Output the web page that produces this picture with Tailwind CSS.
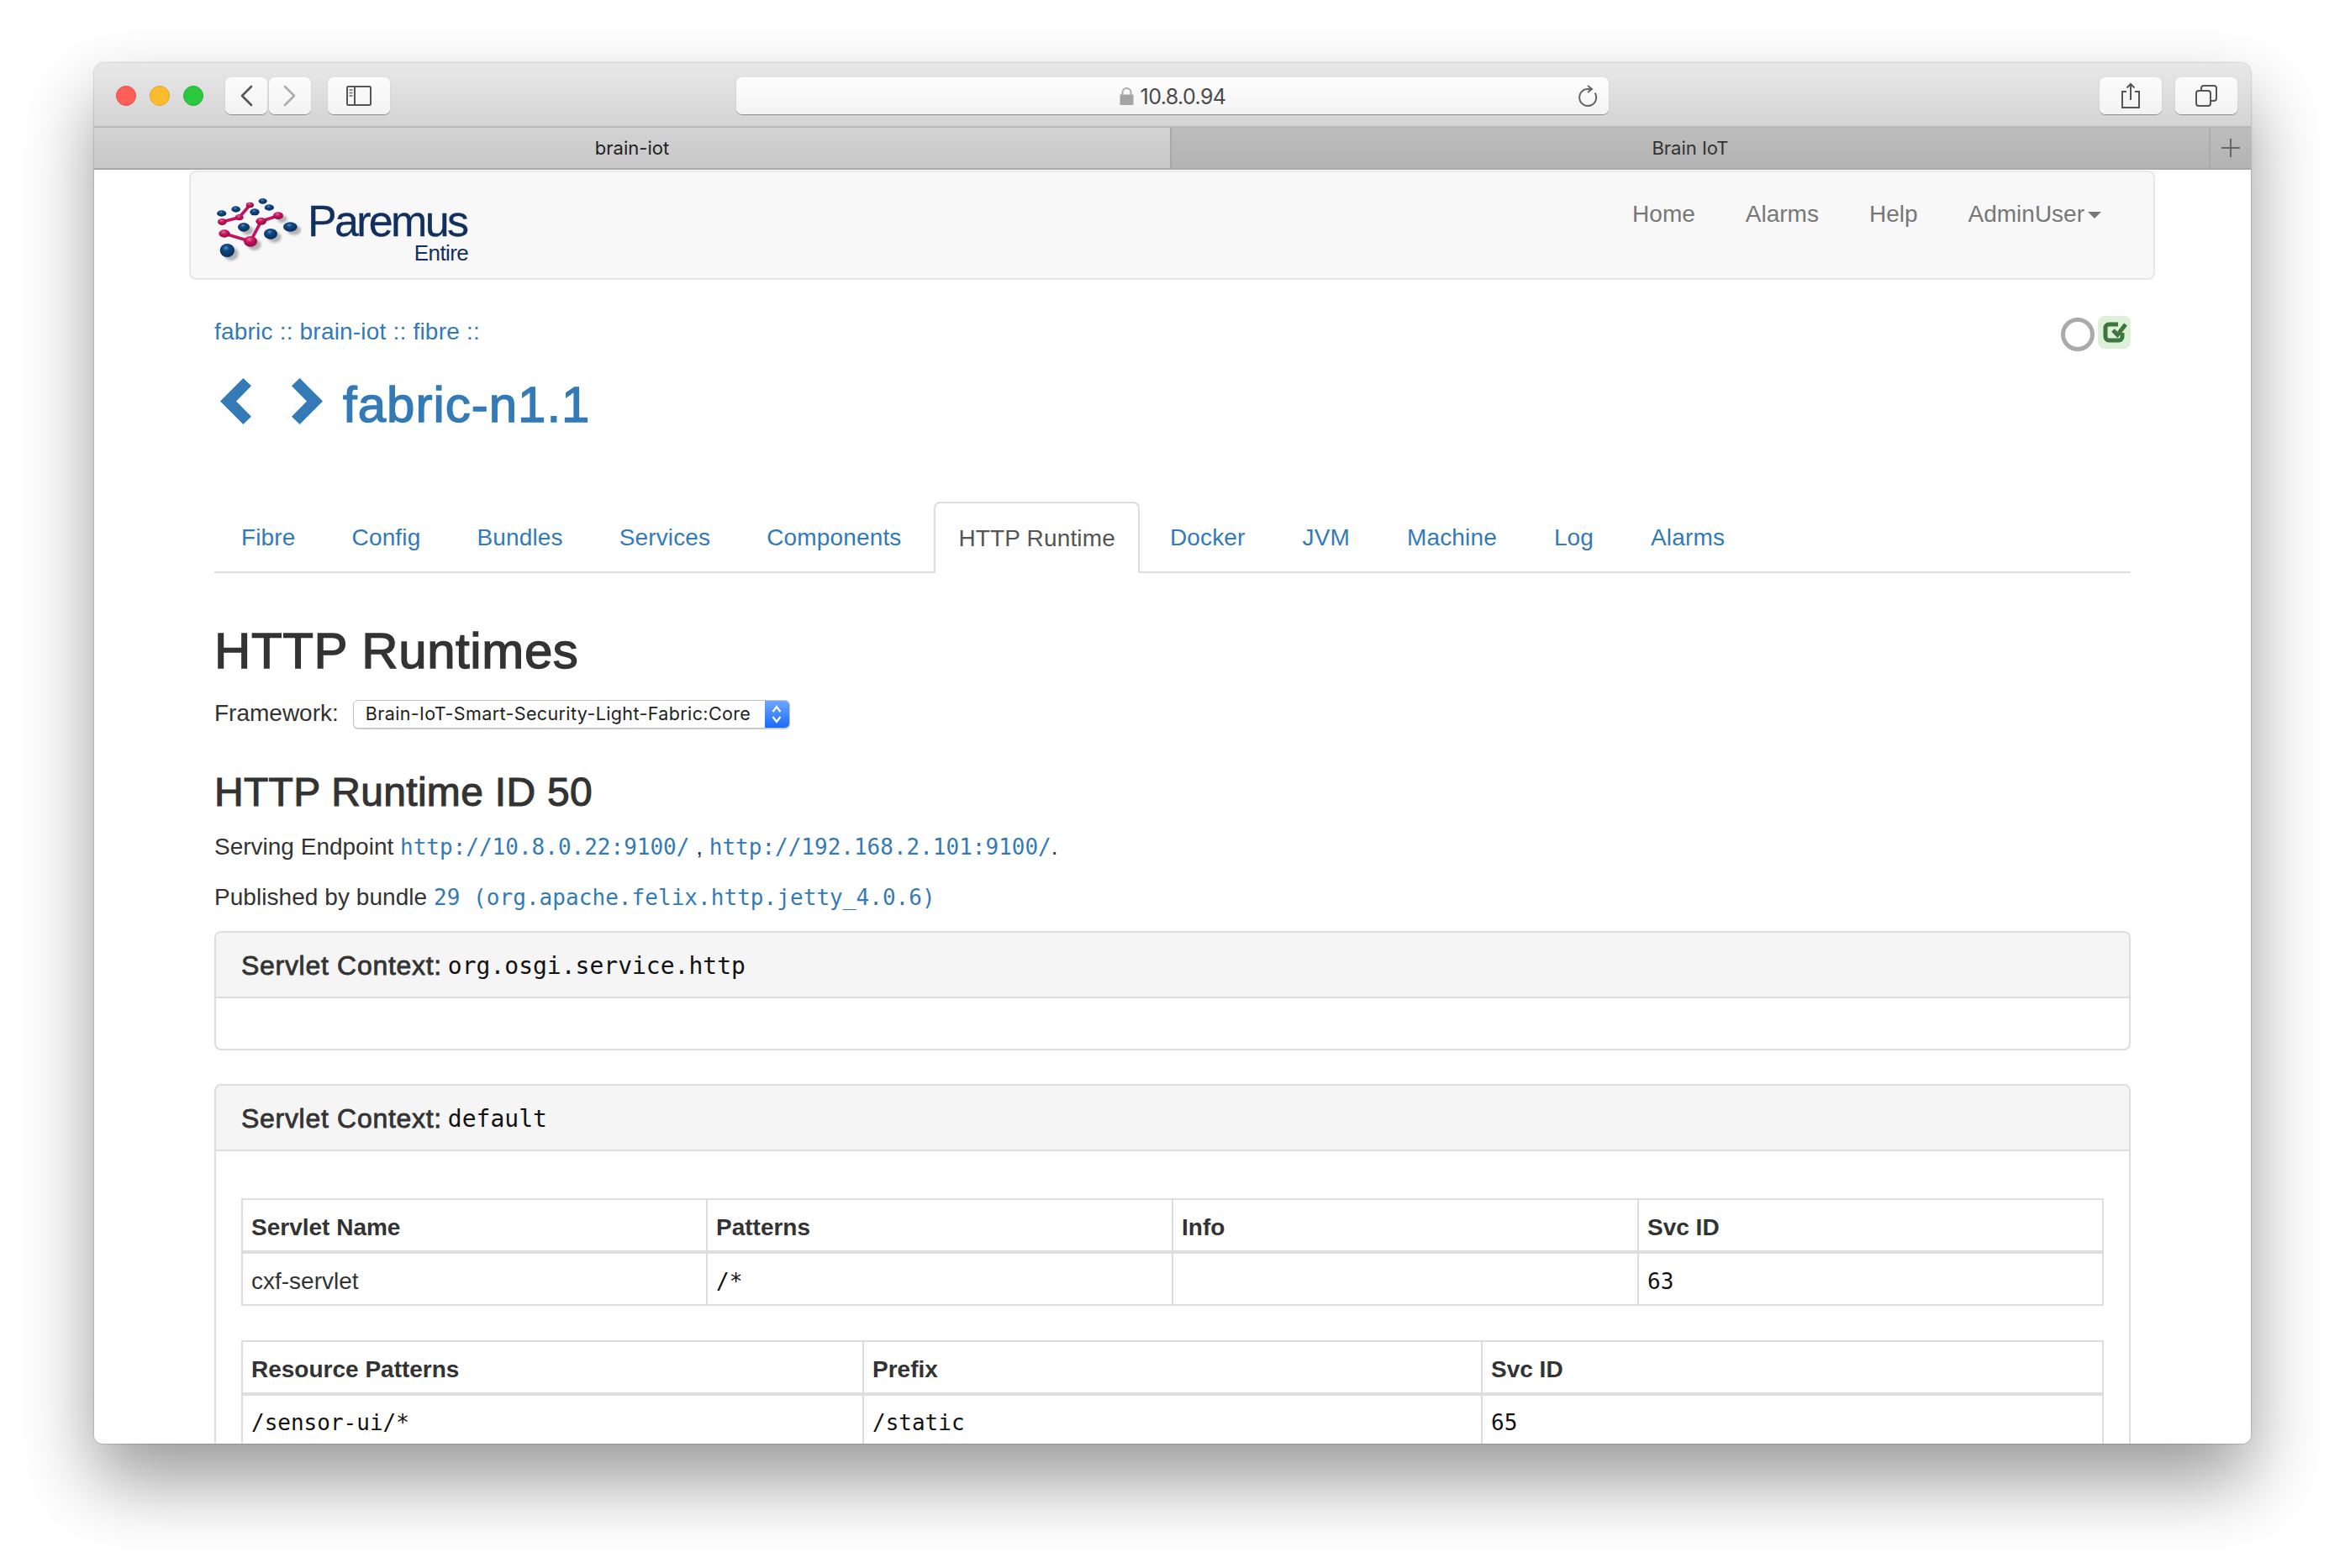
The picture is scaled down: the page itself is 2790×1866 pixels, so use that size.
<!DOCTYPE html>
<html>
<head>
<meta charset="utf-8">
<title>Brain IoT</title>
<script src="https://cdn.jsdelivr.net/npm/@tailwindcss/browser@4"></script>
</head>
<body class="bg-white">
<div class="w-[2790px] h-[1866px] overflow-hidden pt-[75px] px-[112px] bg-white [font-family:'Liberation_Sans',sans-serif]">
  <div class="h-[1643px] rounded-t-[12px] rounded-b-[10px] overflow-hidden flex flex-col bg-white shadow-[0_44px_88px_rgba(0,0,0,0.4),0_0_2px_rgba(0,0,0,0.45)]">

    <!-- Title bar -->
    <div class="h-[77px] shrink-0 flex items-start pt-[17px] pl-[26px] pr-[16px] border-b-2 border-[#b9b9b9] bg-gradient-to-b from-[#e8e8e8] to-[#d4d4d4]">
      <div class="flex gap-[16px] mt-[10px]">
        <div class="w-[24px] h-[24px] rounded-full bg-[#fc5f57] border border-[#e5504a]"></div>
        <div class="w-[24px] h-[24px] rounded-full bg-[#fdbb2e] border border-[#e3a428]"></div>
        <div class="w-[24px] h-[24px] rounded-full bg-[#2ac83f] border border-[#26b038]"></div>
      </div>
      <div class="flex gap-[2px] ml-[26px]">
        <div class="w-[50px] h-[44px] rounded-[7px] bg-gradient-to-b from-[#fcfcfc] to-[#f3f3f3] shadow-[0_1px_1px_rgba(0,0,0,0.35)] flex items-center justify-center">
          <svg width="16" height="26" viewBox="0 0 16 26" fill="none" stroke="#555" stroke-width="2.6" stroke-linecap="round" stroke-linejoin="round"><path d="M14 2 L3 13 L14 24"/></svg>
        </div>
        <div class="w-[50px] h-[44px] rounded-[7px] bg-gradient-to-b from-[#fcfcfc] to-[#f3f3f3] shadow-[0_1px_1px_rgba(0,0,0,0.35)] flex items-center justify-center">
          <svg width="16" height="26" viewBox="0 0 16 26" fill="none" stroke="#adadad" stroke-width="2.6" stroke-linecap="round" stroke-linejoin="round"><path d="M2 2 L13 13 L2 24"/></svg>
        </div>
      </div>
      <div class="w-[74px] h-[44px] ml-[20px] rounded-[7px] bg-gradient-to-b from-[#fcfcfc] to-[#f3f3f3] shadow-[0_1px_1px_rgba(0,0,0,0.35)] flex items-center justify-center">
        <svg width="30" height="24" viewBox="0 0 30 24" fill="none" stroke="#555" stroke-width="2"><rect x="1" y="1" width="28" height="22" rx="1.5"/><path d="M10 1 V23"/><path d="M3.5 5 H7.5 M3.5 8.5 H7.5 M3.5 12 H7.5" stroke="#888" stroke-width="2"/></svg>
      </div>
      <div class="relative w-[1038px] h-[44px] ml-[412px] rounded-[7px] bg-gradient-to-b from-[#fdfdfd] to-[#f3f3f3] shadow-[0_1px_1px_rgba(0,0,0,0.35)] flex items-center justify-center">
        <svg class="mr-[8px]" width="17" height="21" viewBox="0 0 17 21"><path d="M3.5 9 V6 a5 5 0 0 1 10 0 V9" fill="none" stroke="#aaa" stroke-width="2"/><rect x="0.5" y="8.5" width="16" height="12.5" fill="#a4a4a4"/></svg>
        <span class="[font-family:Inter,sans-serif] text-[25px] tracking-[-0.6px] leading-none text-[#4a4a4a] mt-[3px]">10.8.0.94</span>
        <svg class="absolute right-[12px] top-[9px]" width="26" height="27" viewBox="0 0 26 27" fill="none" stroke="#666" stroke-width="2"><path d="M21.5 9.5 A10 10 0 1 1 13 5 H17"/><path d="M13 1 L18 5 L13 9" stroke-linejoin="miter"/></svg>
      </div>
      <div class="w-[74px] h-[44px] ml-[auto] rounded-[7px] bg-gradient-to-b from-[#fcfcfc] to-[#f3f3f3] shadow-[0_1px_1px_rgba(0,0,0,0.35)] flex items-center justify-center">
        <svg width="24" height="32" viewBox="0 0 24 32" fill="none" stroke="#555" stroke-width="2"><path d="M7 11 H2 V30 H22 V11 H17"/><path d="M12 21 V2"/><path d="M7.5 6.5 L12 2 L16.5 6.5"/></svg>
      </div>
      <div class="w-[74px] h-[44px] ml-[16px] rounded-[7px] bg-gradient-to-b from-[#fcfcfc] to-[#f3f3f3] shadow-[0_1px_1px_rgba(0,0,0,0.35)] flex items-center justify-center">
        <svg width="26" height="26" viewBox="0 0 26 26" fill="none" stroke="#555" stroke-width="2"><rect x="1" y="7" width="17" height="18" rx="3"/><path d="M7 7 V4 a3 3 0 0 1 3 -3 H22 a3 3 0 0 1 3 3 V16 a3 3 0 0 1 -3 3 H18"/></svg>
      </div>
    </div>

    <!-- Tab bar -->
    <div class="h-[50px] shrink-0 flex border-b-2 border-[#a9a9a9] text-[22px] [font-family:Inter,sans-serif]">
      <div class="w-[1282px] flex items-center justify-center bg-gradient-to-b from-[#d3d3d3] to-[#c8c8c8] text-[#222] border-r-2 border-[#a9a9a9]">brain-iot</div>
      <div class="flex-1 flex items-center justify-center bg-gradient-to-b from-[#bdbdbd] to-[#b3b3b3] text-[#333]">Brain IoT</div>
      <div class="w-[50px] flex items-center justify-center bg-gradient-to-b from-[#bdbdbd] to-[#b3b3b3] border-l-2 border-[#acacac]">
        <svg width="24" height="24" viewBox="0 0 24 24" stroke="#666" stroke-width="2"><path d="M12 1 V23 M1 12 H23"/></svg>
      </div>
    </div>

    <!-- Page -->
    <div class="flex-1 overflow-hidden bg-white text-[28px] leading-[40px] text-[#333]">

      <!-- Navbar -->
      <div class="ml-[113px] mr-[114px] h-[130px] mt-[1px] border-2 border-[#e7e7e7] rounded-[8px] bg-[#f8f8f8] flex justify-between">
        <div class="flex items-start pl-[28px] pt-[28px]">
          <svg width="104" height="80" viewBox="75 100 310 240">
            <defs>
              <radialGradient id="blue" cx="0.42" cy="0.32" r="0.7"><stop offset="0" stop-color="#5b93c4"/><stop offset="0.3" stop-color="#0f4a86"/><stop offset="1" stop-color="#0a2a55"/></radialGradient>
              <radialGradient id="pink" cx="0.42" cy="0.3" r="0.7"><stop offset="0" stop-color="#f06a9c"/><stop offset="0.4" stop-color="#c9145f"/><stop offset="1" stop-color="#8a0c42"/></radialGradient>
              <filter id="sh" x="-30%" y="-30%" width="160%" height="160%"><feGaussianBlur stdDeviation="5"/></filter>
            </defs>
            <g fill="#000" opacity="0.28" filter="url(#sh)" transform="translate(14 12)">
              <ellipse cx="345" cy="211" rx="25" ry="17"/><ellipse cx="275" cy="236" rx="24" ry="19"/><ellipse cx="120" cy="295" rx="26" ry="24"/><ellipse cx="203" cy="263" rx="24" ry="19"/><ellipse cx="179" cy="212" rx="21" ry="16"/><ellipse cx="302" cy="171" rx="18" ry="13"/>
            </g>
            <g fill="url(#blue)">
              <ellipse cx="100" cy="163" rx="17" ry="11"/><ellipse cx="151" cy="148" rx="16" ry="11"/><ellipse cx="247" cy="119" rx="15" ry="10"/><ellipse cx="270" cy="142" rx="17" ry="11"/><ellipse cx="218" cy="158" rx="17" ry="12"/><ellipse cx="179" cy="212" rx="21" ry="16"/><ellipse cx="345" cy="211" rx="25" ry="17"/><ellipse cx="275" cy="236" rx="24" ry="19"/><ellipse cx="120" cy="295" rx="26" ry="24"/>
            </g>
            <g fill="none" stroke="#c2155e" stroke-width="11" stroke-linejoin="round">
              <path d="M102 193 L163 177 L201 133"/>
              <path d="M110 235 L203 263 L241 191 L302 171"/>
            </g>
            <g fill="url(#pink)">
              <ellipse cx="102" cy="193" rx="16" ry="12"/><ellipse cx="163" cy="177" rx="15" ry="11"/><ellipse cx="201" cy="133" rx="14" ry="10"/><ellipse cx="241" cy="191" rx="19" ry="13"/><ellipse cx="302" cy="171" rx="18" ry="13"/><ellipse cx="110" cy="235" rx="20" ry="14"/><ellipse cx="203" cy="263" rx="24" ry="19"/>
            </g>
          </svg>
          <div class="ml-[7px] flex flex-col items-end text-[#12305f] mt-[6px]">
            <div class="text-[52px] leading-[49px] tracking-[-2.7px] pr-[2px] [-webkit-text-stroke:0.3px]">Paremus</div>
            <div class="text-[26px] leading-[26px] tracking-[-0.6px]">Entire</div>
          </div>
        </div>
        <div class="flex gap-[60px] pr-[62px] pt-[30px] text-[#777] h-[70px]">
          <span>Home</span>
          <span>Alarms</span>
          <span>Help</span>
          <span class="flex items-center h-[40px]">AdminUser<span class="ml-[4px] mt-[2px] w-0 h-0 border-t-[8px] border-x-[8px] border-t-[#777] border-x-transparent"></span></span>
        </div>
      </div>

      <!-- Content -->
      <div class="mx-[143px]">
        <div class="flex justify-between items-start mt-[43px] h-[39px]">
          <div class="text-[#337ab7] mt-[-1px] tracking-[0.2px]">fabric :: brain-iot :: fibre ::</div>
          <div class="flex items-start gap-[4px]">
            <div class="w-[40px] h-[40px] mt-[2px] rounded-full border-[5px] border-[#aaa] blur-[0.6px]"></div>
            <div class="w-[39px] h-[39px] rounded-[8px] bg-[#dff0d8]">
              <svg width="39" height="39" viewBox="0 0 39 39" fill="none" stroke="#3c763d" stroke-width="5"><path d="M24 10 H13 a4 4 0 0 0 -4 4 V25 a4 4 0 0 0 4 4 H25 a4 4 0 0 0 4 -4 V20"/><path d="M18 17 L23.3 22.5 L33 10"/></svg>
            </div>
          </div>
        </div>

        <div class="flex items-center h-[64px] mt-[30px] pl-[7px] text-[#337ab7]">
          <svg width="37" height="55" viewBox="0 0 37 55" fill="#337ab7"><path d="M37 9.3 L27.4 0 L0 27.5 L27.4 55 L37 45.7 L19 27.5 Z"/></svg>
          <svg class="ml-[48px]" width="37" height="55" viewBox="0 0 37 55" fill="#337ab7"><path d="M0 9.3 L9.6 0 L37 27.5 L9.6 55 L0 45.7 L18 27.5 Z"/></svg>
          <div class="ml-[24px] mt-[9px] text-[60px] leading-[64px] tracking-[1px] [-webkit-text-stroke:1.4px]">fabric-n1.1</div>
        </div>

        <ul class="flex h-[85px] mt-[88px] border-b-2 border-[#ddd] text-[#337ab7] tracking-[0.15px]">
          <li class="px-[32px] mr-[3px] h-[83px] pt-[2px] flex items-center">Fibre</li>
          <li class="px-[32px] mr-[3px] h-[83px] pt-[2px] flex items-center">Config</li>
          <li class="px-[32px] mr-[3px] h-[83px] pt-[2px] flex items-center">Bundles</li>
          <li class="px-[32px] mr-[3px] h-[83px] pt-[2px] flex items-center">Services</li>
          <li class="px-[32px] mr-[7px] h-[83px] pt-[2px] flex items-center">Components</li>
          <li class="px-[27px] mr-[4px] h-[85px] flex items-center border-2 border-b-0 border-[#ddd] rounded-t-[8px] bg-white text-[#555]">HTTP Runtime</li>
          <li class="px-[32px] mr-[4px] h-[83px] pt-[2px] flex items-center">Docker</li>
          <li class="px-[32px] mr-[4px] h-[83px] pt-[2px] flex items-center">JVM</li>
          <li class="px-[32px] mr-[4px] h-[83px] pt-[2px] flex items-center">Machine</li>
          <li class="px-[32px] mr-[4px] h-[83px] pt-[2px] flex items-center">Log</li>
          <li class="px-[32px] mr-[4px] h-[83px] pt-[2px] flex items-center">Alarms</li>
        </ul>

        <h1 class="mt-[60px] text-[60px] leading-[66px] tracking-[0.6px] [-webkit-text-stroke:1.4px]">HTTP Runtimes</h1>

        <div class="flex items-center h-[34px] mt-[25px]">
          <span class="mt-[-2px]">Framework:</span>
          <div class="ml-[17px] w-[520px] h-[34px] rounded-[6px] border border-[#c4c4c4] shadow-[0_1px_1px_rgba(0,0,0,0.2)] bg-white flex items-center justify-between overflow-hidden">
            <span class="pl-[14px] [font-family:Inter,sans-serif] text-[21.5px] tracking-[0.38px] leading-none text-[#222]">Brain-IoT-Smart-Security-Light-Fabric:Core</span>
            <span class="w-[29px] h-[34px] bg-gradient-to-b from-[#6ea8ff] to-[#1667fb] flex items-center justify-center">
              <svg width="14" height="24" viewBox="0 0 14 24" fill="none" stroke="#fff" stroke-width="2.2"><path d="M2.5 9 L7 3 L11.5 9 M2.5 15 L7 21 L11.5 15"/></svg>
            </span>
          </div>
        </div>

        <h3 class="mt-[50px] text-[48px] leading-[52px] tracking-[0.3px] [-webkit-text-stroke:1.1px]">HTTP Runtime ID 50</h3>

        <p class="mt-[19px]">Serving Endpoint <a class="[font-family:'DejaVu_Sans_Mono',monospace] text-[26px] text-[#337ab7]">http://10.8.0.22:9100/</a> , <a class="[font-family:'DejaVu_Sans_Mono',monospace] text-[26px] text-[#337ab7]">http://192.168.2.101:9100/</a>.</p>
        <p class="mt-[20px] tracking-[0.05px]">Published by bundle <a class="[font-family:'DejaVu_Sans_Mono',monospace] text-[26px] text-[#337ab7]">29 (org.apache.felix.http.jetty_4.0.6)</a></p>

        <!-- Panel 1 -->
        <div class="mt-[20px] border-2 border-[#ddd] rounded-[8px] overflow-hidden">
          <div class="h-[78px] px-[30px] pt-[2px] bg-[#f5f5f5] border-b-2 border-[#ddd] flex items-center text-[32px]">
            <span class="tracking-[0.7px] [-webkit-text-stroke:0.8px]">Servlet Context:</span>
            <span class="ml-[7px] mt-[2px] [font-family:'DejaVu_Sans_Mono',monospace] text-[28px] text-[#111]">org.osgi.service.http</span>
          </div>
          <div class="h-[60px]"></div>
        </div>

        <!-- Panel 2 -->
        <div class="mt-[40px] border-2 border-[#ddd] rounded-[8px] overflow-hidden">
          <div class="h-[78px] px-[30px] pt-[2px] bg-[#f5f5f5] border-b-2 border-[#ddd] flex items-center text-[32px]">
            <span class="tracking-[0.7px] [-webkit-text-stroke:0.8px]">Servlet Context:</span>
            <span class="ml-[7px] mt-[2px] [font-family:'DejaVu_Sans_Mono',monospace] text-[28px] text-[#111]">default</span>
          </div>
          <div class="px-[30px] pt-[56px] pb-[30px]">
            <table class="w-full table-fixed border-separate border-spacing-0">
              <colgroup><col class="w-[555px]"><col class="w-[554px]"><col class="w-[554px]"><col></colgroup>
              <thead>
                <tr>
                  <th class="h-[66px] px-[10px] pt-[6px] text-left font-bold border-2 border-b-4 border-[#ddd]">Servlet Name</th>
                  <th class="h-[66px] px-[10px] pt-[6px] text-left font-bold border-t-2 border-r-2 border-b-4 border-[#ddd]">Patterns</th>
                  <th class="h-[66px] px-[10px] pt-[6px] text-left font-bold border-t-2 border-r-2 border-b-4 border-[#ddd]">Info</th>
                  <th class="h-[66px] px-[10px] pt-[6px] text-left font-bold border-t-2 border-r-2 border-b-4 border-[#ddd]">Svc ID</th>
                </tr>
              </thead>
              <tbody>
                <tr>
                  <td class="h-[62px] px-[10px] pt-[5px] border-l-2 border-r-2 border-b-2 border-[#ddd]">cxf-servlet</td>
                  <td class="h-[62px] px-[10px] pt-[5px] border-r-2 border-b-2 border-[#ddd] [font-family:'DejaVu_Sans_Mono',monospace] text-[26px] text-[#111]">/*</td>
                  <td class="h-[62px] px-[10px] pt-[5px] border-r-2 border-b-2 border-[#ddd]"></td>
                  <td class="h-[62px] px-[10px] pt-[5px] border-r-2 border-b-2 border-[#ddd] [font-family:'DejaVu_Sans_Mono',monospace] text-[26px] text-[#111]">63</td>
                </tr>
              </tbody>
            </table>
            <table class="w-full table-fixed border-separate border-spacing-0 mt-[41px]">
              <colgroup><col class="w-[741px]"><col class="w-[736px]"><col></colgroup>
              <thead>
                <tr>
                  <th class="h-[66px] px-[10px] pt-[5px] text-left font-bold border-2 border-b-4 border-[#ddd]">Resource Patterns</th>
                  <th class="h-[66px] px-[10px] pt-[5px] text-left font-bold border-t-2 border-r-2 border-b-4 border-[#ddd]">Prefix</th>
                  <th class="h-[66px] px-[10px] pt-[5px] text-left font-bold border-t-2 border-r-2 border-b-4 border-[#ddd]">Svc ID</th>
                </tr>
              </thead>
              <tbody>
                <tr>
                  <td class="h-[62px] px-[10px] pt-[3px] border-l-2 border-r-2 border-b-2 border-[#ddd] [font-family:'DejaVu_Sans_Mono',monospace] text-[26px] text-[#111]">/sensor-ui/*</td>
                  <td class="h-[62px] px-[10px] pt-[3px] border-r-2 border-b-2 border-[#ddd] [font-family:'DejaVu_Sans_Mono',monospace] text-[26px] text-[#111]">/static</td>
                  <td class="h-[62px] px-[10px] pt-[3px] border-r-2 border-b-2 border-[#ddd] [font-family:'DejaVu_Sans_Mono',monospace] text-[26px] text-[#111]">65</td>
                </tr>
              </tbody>
            </table>
          </div>
        </div>
      </div>
    </div>
  </div>
</div>
</body>
</html>
